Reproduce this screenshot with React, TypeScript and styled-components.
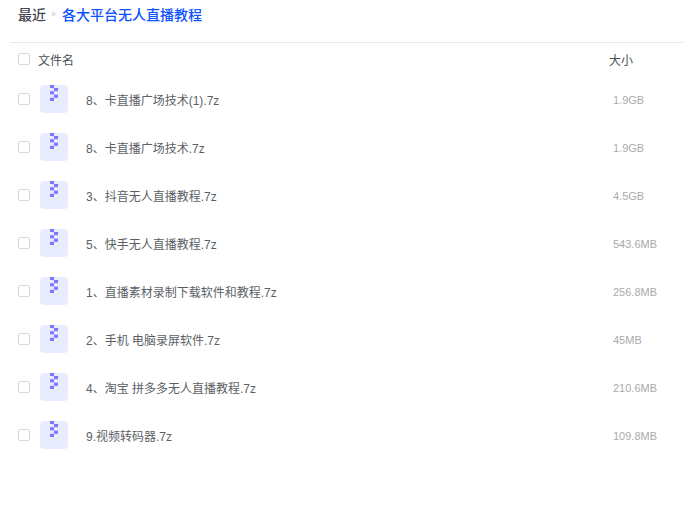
import React from "react";
import styled, { createGlobalStyle } from "styled-components";

const Global = createGlobalStyle`
  html, body { margin: 0; padding: 0; background: #fff; }
  body { font-family: "Liberation Sans", "Noto Sans CJK SC", sans-serif; }
`;

const Page = styled.div`
  width: 683px;
  height: 505px;
  overflow: hidden;
  padding-left: 10px;
  box-sizing: border-box;
`;

const Breadcrumb = styled.div`
  height: 42px;
  box-sizing: border-box;
  padding: 5px 0 0 8px;
  display: flex;
  align-items: flex-start;
  font-size: 14px;
  line-height: 20px;
  font-weight: 500;
`;

const Crumb = styled.span<{ $active?: boolean }>`
  color: ${(p) => (p.$active ? "#0d53ff" : "#42464f")};
`;

const Caret = styled.span`
  width: 0;
  height: 0;
  margin: 6px 5px 0 6px;
  border-left: 5px solid #dfe0e3;
  border-top: 3.5px solid transparent;
  border-bottom: 3.5px solid transparent;
`;

const Header = styled.div`
  border-top: 1px solid #e8e8e8;
  height: 32px;
  display: flex;
  align-items: center;
  padding: 0 0 0 8px;
  font-size: 12px;
  color: #4b4f58;
`;

const Check = styled.span`
  width: 12px;
  height: 12px;
  box-sizing: border-box;
  border: 1px solid #d9d9d9;
  border-radius: 2px;
  background: #fff;
  flex: none;
`;

const HeadName = styled.span`
  margin-left: 8px;
  flex: 1;
`;

const HeadSize = styled.span`
  width: 74px;
  flex: none;
`;

const Row = styled.div`
  height: 48px;
  display: flex;
  align-items: center;
  padding-left: 8px;
  font-size: 12px;
`;

const IconTile = styled.svg`
  width: 28px;
  height: 28px;
  margin-left: 10px;
  flex: none;
  display: block;
`;

const Name = styled.span`
  margin-left: 18px;
  flex: 1;
  color: #5c5f66;
`;

const Size = styled.span`
  width: 70px;
  flex: none;
  padding-top: 2px;
  font-size: 11px;
  color: #aaaaad;
`;

const files: [string, string][] = [
  ["8、卡直播广场技术(1).7z", "1.9GB"],
  ["8、卡直播广场技术.7z", "1.9GB"],
  ["3、抖音无人直播教程.7z", "4.5GB"],
  ["5、快手无人直播教程.7z", "543.6MB"],
  ["1、直播素材录制下载软件和教程.7z", "256.8MB"],
  ["2、手机 电脑录屏软件.7z", "45MB"],
  ["4、淘宝 拼多多无人直播教程.7z", "210.6MB"],
  ["9.视频转码器.7z", "109.8MB"],
];

const ZipIcon = () => (
  <IconTile viewBox="0 0 28 28">
    <rect width="28" height="28" rx="4" fill="#e9ebff" />
    <g fill="#7d78fb">
      <rect x="10" y="0" width="4" height="3" />
      <rect x="14" y="3" width="4" height="3.2" />
      <rect x="10" y="6.2" width="4" height="3.2" />
      <rect x="14" y="9.6" width="4" height="3.2" />
      <rect x="10" y="12.8" width="4" height="3.2" />
    </g>
  </IconTile>
);

export default function App() {
  return (
    <Page>
      <Global />
      <Breadcrumb>
        <Crumb>最近</Crumb>
        <Caret />
        <Crumb $active>各大平台无人直播教程</Crumb>
      </Breadcrumb>
      <Header>
        <Check />
        <HeadName>文件名</HeadName>
        <HeadSize>大小</HeadSize>
      </Header>
      {files.map(([name, size]) => (
        <Row key={name}>
          <Check />
          <ZipIcon />
          <Name>{name}</Name>
          <Size>{size}</Size>
        </Row>
      ))}
    </Page>
  );
}
